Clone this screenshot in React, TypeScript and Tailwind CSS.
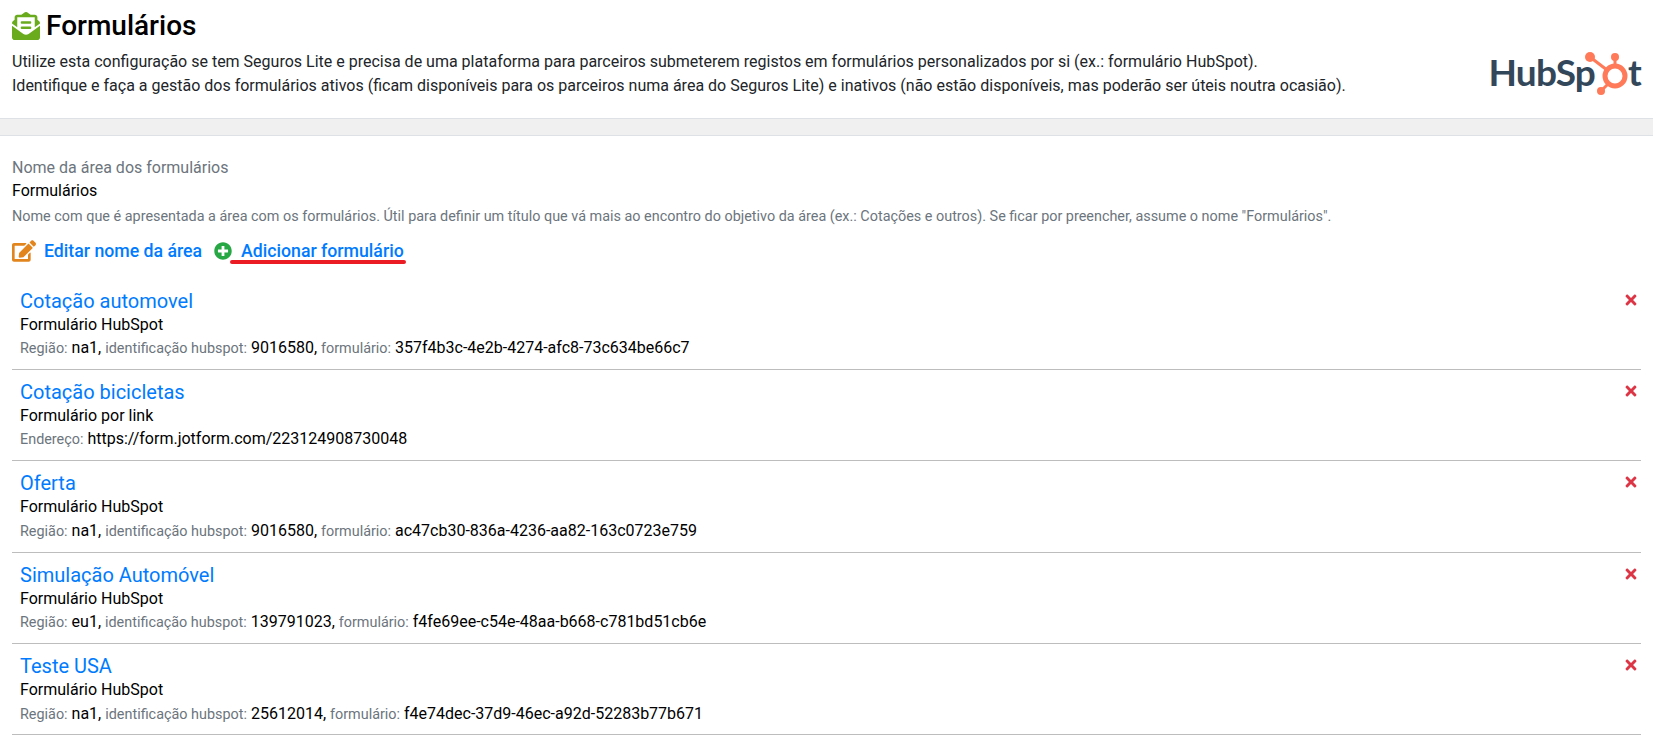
import React from "react";
import { FaEnvelopeOpenText, FaEdit, FaPlusCircle, FaTimes } from "react-icons/fa";

type Pair = [string, string];
type Item = { title: string; kind: string; meta: Pair[] };

const items: Item[] = [
  { title: "Cotação automovel", kind: "Formulário HubSpot", meta: [["Região:", "na1,"], ["identificação hubspot:", "9016580,"], ["formulário:", "357f4b3c-4e2b-4274-afc8-73c634be66c7"]] },
  { title: "Cotação bicicletas", kind: "Formulário por link", meta: [["Endereço:", "https://form.jotform.com/223124908730048"]] },
  { title: "Oferta", kind: "Formulário HubSpot", meta: [["Região:", "na1,"], ["identificação hubspot:", "9016580,"], ["formulário:", "ac47cb30-836a-4236-aa82-163c0723e759"]] },
  { title: "Simulação Automóvel", kind: "Formulário HubSpot", meta: [["Região:", "eu1,"], ["identificação hubspot:", "139791023,"], ["formulário:", "f4fe69ee-c54e-48aa-b668-c781bd51cb6e"]] },
  { title: "Teste USA", kind: "Formulário HubSpot", meta: [["Região:", "na1,"], ["identificação hubspot:", "25612014,"], ["formulário:", "f4e74dec-37d9-46ec-a92d-52283b77b671"]] },
];

function HubSpotLogo() {
  return (
    <div className="flex items-end text-[#33475b] font-['Lato',sans-serif] font-bold text-[37px] leading-[44px] tracking-[-0.8px]">
      <span>HubSp</span>
      <svg width="46" height="44" viewBox="0 0 46 44" className="ml-[-10px] mr-[-3px] mb-[-2px] shrink-0">
        <circle cx="30" cy="24" r="10" fill="none" stroke="#ff7a59" strokeWidth="5" />
        <path d="M30 14 V5 M22 18 L5 5 M24 31 L16 39" stroke="#ff7a59" strokeWidth="3" fill="none" />
        <circle cx="30" cy="5" r="4" fill="#ff7a59" />
        <circle cx="5" cy="5" r="5" fill="#ff7a59" />
        <circle cx="16" cy="39" r="4" fill="#ff7a59" />
      </svg>
      <span>t</span>
    </div>
  );
}

export default function App() {
  return (
    <div className="min-h-[747px] bg-white text-[#212529] font-['Roboto',sans-serif]">
      <header className="h-[119px] flex items-start justify-between pl-3 pr-[12px] border-b border-[#dee2e6]">
        <div className="shrink-0">
          <h1 className="flex items-center gap-[6px] pt-[9px] text-[28px] leading-[34px] font-medium text-black">
            <FaEnvelopeOpenText className="text-[#6aab1e] w-[28px] h-[28px]" />
            Formulários
          </h1>
          <p className="mt-[7px] text-[16px] leading-[24px]">
            Utilize esta configuração se tem Seguros Lite e precisa de uma plataforma para parceiros submeterem registos em formulários personalizados por si (ex.: formulário HubSpot).
            <br />
            Identifique e faça a gestão dos formulários ativos (ficam disponíveis para os parceiros numa área do Seguros Lite) e inativos (não estão disponíveis, mas poderão ser úteis noutra ocasião).
          </p>
        </div>
        <div className="pt-[50px]"><HubSpotLogo /></div>
      </header>
      <div className="h-[17px] bg-[#f0f0f0] border-b border-[#dee2e6]" />
      <main className="px-3 pt-[20px]">
        <div className="text-[16px] leading-[24px] text-[#6c757d]">Nome da área dos formulários</div>
        <div className="text-[16px] leading-[22px] text-black">Formulários</div>
        <div className="mt-[4px] text-[14.4px] leading-[21px] text-[#6c757d]">
          Nome com que é apresentada a área com os formulários. Útil para definir um título que vá mais ao encontro do objetivo da área (ex.: Cotações e outros). Se ficar por preencher, assume o nome "Formulários".
        </div>
        <div className="mt-[11px] flex items-center text-[17.7px] leading-[26px] font-medium text-[#007bff]">
          <FaEdit className="text-[#e2851d] w-[24px] h-[22px] mr-[8px]" />
          <span>Editar nome da área</span>
          <FaPlusCircle className="text-[#28a745] w-[18px] h-[18px] ml-[12px] mr-[9px]" />
          <span className="relative">
            Adicionar formulário
            <span className="absolute left-[-11px] right-[-2px] top-[22px] h-[3.5px] rounded-full bg-[#ec1c24]" />
          </span>
        </div>
        <ul className="mt-[14.5px]">
          {items.map((item) => (
            <li key={item.title} className="relative h-[91.4px] border-b border-[#bdbdbd] px-[8px] pt-[10px]">
              <div className="text-[20px] leading-[24px] font-normal text-[#007bff]">{item.title}</div>
              <div className="text-[16px] leading-[23.5px] text-black">{item.kind}</div>
              <div className="text-[16px] leading-[23.5px] text-black">
                {item.meta.map(([label, value], i) => (
                  <React.Fragment key={label}>
                    {i > 0 && " "}
                    <span className="text-[14.4px] text-[#6c757d]">{label}</span> {value}
                  </React.Fragment>
                ))}
              </div>
              <FaTimes className="absolute right-[2px] top-[13px] w-[16px] h-[16px] text-[#dc3545]" />
            </li>
          ))}
        </ul>
      </main>
    </div>
  );
}
